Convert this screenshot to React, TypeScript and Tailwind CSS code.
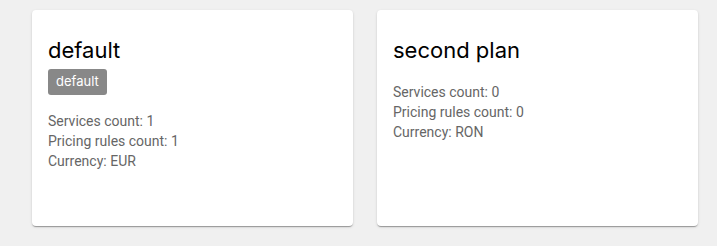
import React from "react";

type Plan = { name: string; isDefault?: boolean; services: number; rules: number; currency: string };

const plans: Plan[] = [
  { name: "default", isDefault: true, services: 1, rules: 1, currency: "EUR" },
  { name: "second plan", services: 0, rules: 0, currency: "RON" },
];

function Card({ p }: { p: Plan }) {
  return (
    <div className="w-[321px] h-[216px] bg-white rounded-[4px] shadow-[0_2px_1px_-1px_rgba(0,0,0,0.2),0_1px_1px_0_rgba(0,0,0,0.14),0_1px_3px_0_rgba(0,0,0,0.12)] px-4 pt-6">
      <div className="text-[22px] leading-[32px] text-black mb-[3px] font-['Inter',sans-serif]">{p.name}</div>
      {p.isDefault && (
        <div className="flex">
          <span className="h-[26px] px-2 flex items-center rounded-[3px] bg-[#888888] text-white text-[13px] font-['Inter',sans-serif]">default</span>
        </div>
      )}
      <div className="mt-4 text-[14px] leading-[20px] text-[#666666] font-['Roboto',sans-serif]">
        <div>Services count: {p.services}</div>
        <div>Pricing rules count: {p.rules}</div>
        <div>Currency: {p.currency}</div>
      </div>
    </div>
  );
}

export default function App() {
  return (
    <div className="w-[717px] h-[246px] bg-[#f0f0f0] pt-[10px] pl-[32px] flex gap-6">
      {plans.map((p) => (
        <Card key={p.name} p={p} />
      ))}
    </div>
  );
}
